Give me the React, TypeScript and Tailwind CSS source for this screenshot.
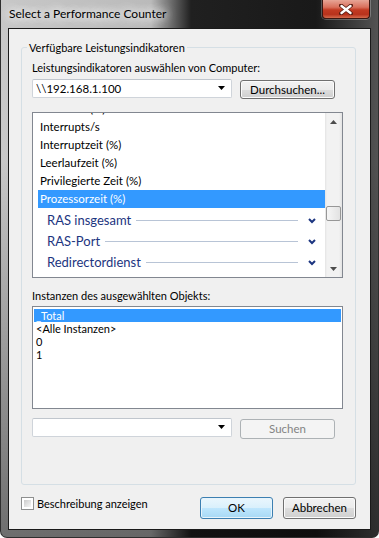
import React from 'react';

const counters = ['DPC-Zeit (%)', 'Interrupts/s', 'Interruptzeit (%)', 'Leerlaufzeit (%)', 'Privilegierte Zeit (%)', 'Prozessorzeit (%)'];
const categories = ['RAS insgesamt', 'RAS-Port', 'Redirectordienst'];
const instances = ['_Total', '<Alle Instanzen>', '0', '1'];

const buttonBase =
  'rounded-[3px] border text-[11.5px] leading-none flex items-center justify-center';
const buttonNormal =
  'border-[#707070] text-black bg-[linear-gradient(to_bottom,#f2f2f2_0%,#ebebeb_50%,#dddddd_51%,#cfcfcf_100%)] shadow-[inset_0_0_0_1px_#fbfbfb]';

const DropArrow = () => (
  <svg width="8" height="5" viewBox="0 0 8 5">
    <path d="M0 0 H7 L3.5 4 Z" fill="#000" />
  </svg>
);

const ComboBox = ({ value }: { value?: string }) => (
  <div className="w-[200px] h-[19px] bg-white border border-[#cfd4da] border-t-[#c0c6cd] rounded-[2px] flex items-center pl-[3px] pr-[5px]">
    <span className="flex-1 truncate text-[11.5px]">{value}</span>
    <DropArrow />
  </div>
);

const Chevron = () => (
  <svg width="8" height="6" viewBox="0 0 8 6">
    <path d="M1 1 L4 4 L7 1" fill="none" stroke="#1c3580" strokeWidth="2" />
  </svg>
);

const ScrollArrow = ({ up }: { up?: boolean }) => (
  <div className="h-[17px] flex items-center justify-center">
    <svg width="7" height="4" viewBox="0 0 7 4">
      <path d={up ? 'M0 4 H7 L3.5 0 Z' : 'M0 0 H7 L3.5 4 Z'} fill="#4d4d4d" />
    </svg>
  </div>
);

const CounterList = () => (
  <div className="mt-[13px] w-[311px] h-[166px] border border-[#828790] bg-white flex overflow-hidden">
    <div className="flex-1 overflow-hidden pl-[5px]">
      <div className="-mt-[13px]">
        {counters.map((c) => (
          <div
            key={c}
            className={`h-[18px] leading-[18px] pl-[2px] text-[11.5px] ${c === 'Prozessorzeit (%)' ? 'bg-[#3399ff] text-white' : ''}`}
          >
            {c}
          </div>
        ))}
        <div className="mt-[2px]">
          {categories.map((c) => (
            <div key={c} className="h-[21px] flex items-center pl-[9px] pr-[9px]">
              <span className="text-[13px] text-[#1c3580]">{c}</span>
              <div className="flex-1 h-px bg-[#b8c4d6] ml-[5px] mr-[10px]" />
              <Chevron />
            </div>
          ))}
        </div>
      </div>
    </div>
    <div className="w-[17px] flex flex-col bg-[linear-gradient(to_right,#e3e3e3_0px,#f2f2f2_2px,#f2f2f2_14px,#e3e3e3_17px)]">
      <ScrollArrow up />
      <div className="flex-1">
        <div className="mt-[76px] ml-[1px] w-[15px] h-[15px] rounded-[2px] border border-[#979797] bg-[linear-gradient(to_right,#f6f6f6,#e2e2e2)]" />
      </div>
      <ScrollArrow />
    </div>
  </div>
);

const InstanceList = () => (
  <div className="mt-[3px] w-[311px] h-[103px] border border-[#828790] bg-white pt-[2px] px-[1px]">
    {instances.map((i, idx) => (
      <div
        key={i}
        className={`h-[13px] leading-[13px] pl-[2px] ${idx === 0 ? 'bg-[#3399ff] text-white' : ''}`}
      >
        {i}
      </div>
    ))}
  </div>
);

const CloseButton = () => (
  <div className="w-[48px] h-[19px] mr-[8px] rounded-b-[4px] border border-t-0 border-[#3b1610] shadow-[0_0_0_1px_rgba(255,255,255,0.25)] bg-[linear-gradient(to_bottom,#e7a596_0%,#d9705c_40%,#c23a22_55%,#b8321c_80%,#d46a4c_100%)] flex items-center justify-center">
    <svg width="14" height="11" viewBox="0 0 14 11">
      <path d="M2 1.5 L12 9.5 M12 1.5 L2 9.5" stroke="#5a1d12" strokeWidth="4" strokeLinecap="round" />
      <path d="M2.5 2 L11.5 9 M11.5 2 L2.5 9" stroke="#ffffff" strokeWidth="2.4" strokeLinecap="round" />
    </svg>
  </div>
);

export default function App() {
  return (
    <div className="w-[379px] h-[538px] overflow-hidden rounded-b-[7px] border-x border-b border-[#2e2e2e] flex flex-col font-['Lato',sans-serif] text-[11px] text-black bg-[linear-gradient(to_bottom,rgba(0,0,0,0)_0%,rgba(0,0,0,0)_30%,rgba(0,0,0,0.45)_100%),linear-gradient(to_right,#c8c8c8_0px,#bababa_150px,#202020_190px,#191919_315px,#555555_379px)]">
      <div className="h-[28px] flex items-start justify-between pl-[8px]">
        <span className="mt-[6px] text-[12px] leading-[16px] text-black [text-shadow:0_0_8px_#fff,0_0_12px_#fff,0_0_14px_#fff]">
          Select a Performance Counter
        </span>
        <CloseButton />
      </div>

      <div className="mx-[7px] h-[502px] border border-[#1a1a1a] bg-[#f0f0f0] flex flex-col px-[12px]">
        <fieldset className="mt-[11px] w-[335px] border border-[#d5dfe5] rounded-[3px] pb-[45px]">
          <legend className="ml-[5px] px-[2px] leading-[15px]">Verfügbare Leistungsindikatoren</legend>
          <div className="pl-[10px] flex flex-col">
            <div className="mt-[5px] leading-[15px]">Leistungsindikatoren auswählen von Computer:</div>
            <div className="mt-[4px] flex items-start gap-[8px]">
              <ComboBox value="\\192.168.1.100" />
              <button className={`mt-[1px] w-[95px] h-[19px] ${buttonBase} ${buttonNormal}`}>Durchsuchen...</button>
            </div>
            <CounterList />
            <div className="mt-[10px] leading-[15px]">Instanzen des ausgewählten Objekts:</div>
            <InstanceList />
            <div className="mt-[9px] flex items-start gap-[8px]">
              <ComboBox />
              <button className={`mt-[1px] w-[95px] h-[20px] ${buttonBase} border-[#adb2b5] bg-[#f4f4f4] text-[#838383]`}>Suchen</button>
            </div>
          </div>
        </fieldset>

        <div className="mt-[12px] w-[335px] flex items-start">
          <div className="flex items-center gap-[3px]">
            <div className="w-[13px] h-[13px] border border-[#8e8f8f] bg-white p-[2px]">
              <div className="w-full h-full bg-[linear-gradient(135deg,#cbcbcb,#f6f6f6)]" />
            </div>
            <span className="leading-[13px]">Beschreibung anzeigen</span>
          </div>
          <div className="ml-auto flex gap-[10px]">
            <button className={`w-[73px] h-[22px] ${buttonBase} border-[#3c7fb1] text-black bg-[linear-gradient(to_bottom,#eaf6fd_0%,#d9f0fc_50%,#bee6fd_51%,#a7d9f5_100%)] shadow-[inset_0_0_0_1px_#e8f4fb]`}>
              OK
            </button>
            <button className={`w-[73px] h-[22px] ${buttonBase} ${buttonNormal}`}>Abbrechen</button>
          </div>
        </div>
      </div>
    </div>
  );
}
